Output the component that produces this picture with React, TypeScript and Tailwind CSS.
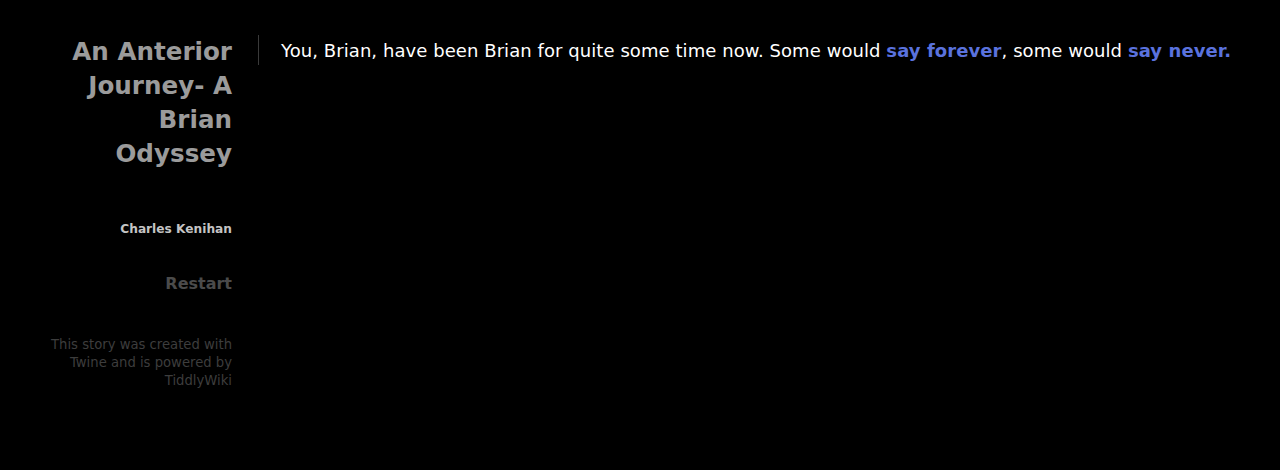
export default function App() {
  return (
    <div
      className="min-h-[470px] w-full bg-black"
      style={{ fontFamily: '"DejaVu Sans", Verdana, sans-serif' }}
    >
      <div className="flex items-start">
        <div className="ml-[40px] mt-[35px] w-[192px] text-right">
          <h1 className="text-[24.6px] font-bold leading-[34px] text-[#9b9b9b]">
            An Anterior Journey- A Brian Odyssey
          </h1>
          <p className="mt-[49px] text-[12.2px] font-bold leading-[18px] text-[#c4c4c4]">
            Charles Kenihan
          </p>
          <p className="mt-[36px] text-[16px] font-bold leading-[20px] text-[#4b4b4b]">
            Restart
          </p>
          <p className="mt-[42px] text-[13.2px] leading-[18px] text-[#3d3d3d]">
            This story was created with Twine and is powered by TiddlyWiki
          </p>
        </div>
        <div className="ml-[26px] mt-[35px] border-l border-[#3a3a3a] pl-[22px] pt-px text-[18px] leading-[29px] tracking-[0.07px] text-white">
          You, Brian, have been Brian for quite some time now. Some would{' '}
          <a className="font-bold text-[#5a72de]">say forever</a>, some would{' '}
          <a className="font-bold text-[#5a72de]">say never.</a>
        </div>
      </div>
    </div>
  )
}
